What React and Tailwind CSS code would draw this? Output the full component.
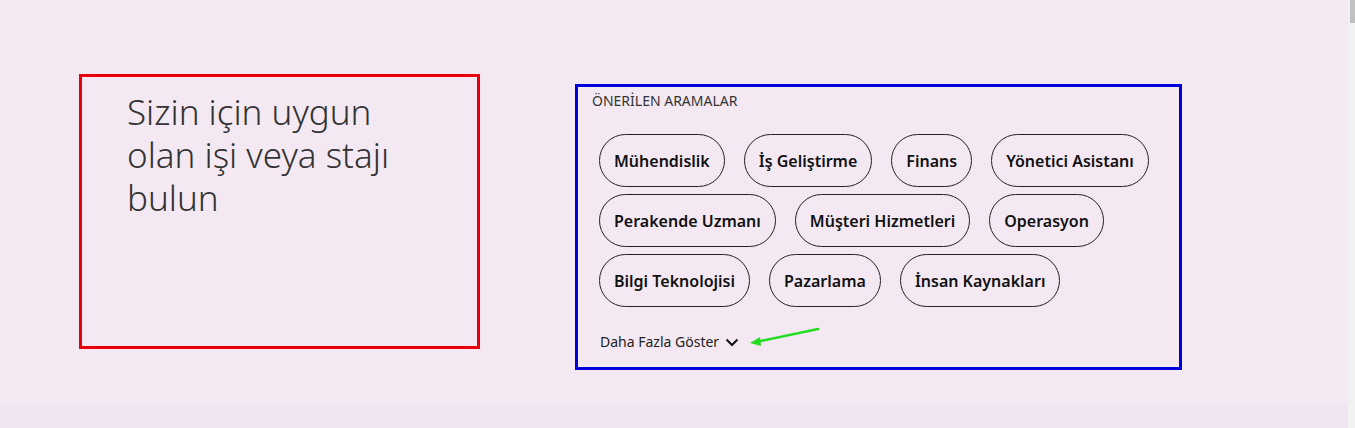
import React from 'react';

const searches = [
  'Mühendislik',
  'İş Geliştirme',
  'Finans',
  'Yönetici Asistanı',
  'Perakende Uzmanı',
  'Müşteri Hizmetleri',
  'Operasyon',
  'Bilgi Teknolojisi',
  'Pazarlama',
  'İnsan Kaynakları',
];

const App = () => {
  return (
    <div className="flex h-[428px] bg-[#f4e9f3] font-['Noto_Sans',sans-serif] text-[#333]">
      <div className="flex-1 flex flex-col">
        <div className="flex items-start h-[405px]">
          {/* Heading block */}
          <div className="ml-[79px] mt-[74px] w-[401px] h-[275px] border-[3px] border-[#e8000b] pl-[45px] pt-[13px]">
            <h1 className="text-[35px] leading-[43px] font-light text-[#333]">
              Sizin için uygun
              <br />
              olan işi veya stajı
              <br />
              bulun
            </h1>
          </div>

          {/* Suggested searches */}
          <div className="relative ml-[95px] mt-[84px] w-[607px] h-[286px] border-[3px] border-[#0000dd] pl-[14px] pt-[4px]">
            <p className="text-[14px] leading-[20px] text-[#333]">ÖNERİLEN ARAMALAR</p>
            <div className="mt-[23px] ml-[7px] w-[575px] flex flex-wrap gap-x-[19px] gap-y-[7px]">
              {searches.map((s) => (
                <button
                  key={s}
                  className="h-[53px] px-[14px] rounded-full border border-[#222] text-[16px] font-semibold text-[#111]"
                >
                  {s}
                </button>
              ))}
            </div>
            <button className="mt-[25px] ml-[8px] flex items-center gap-[6px] text-[14px] leading-[20px] text-[#222]">
              Daha Fazla Göster
              <svg width="14" height="9" viewBox="0 0 14 9" fill="none">
                <path d="M1.5 1.5 L7 7 L12.5 1.5" stroke="#111" strokeWidth="2" />
              </svg>
            </button>

            {/* annotation arrow */}
            <svg className="absolute left-[168px] top-[238px]" width="80" height="24" viewBox="0 0 80 24">
              <path d="M72 4 L10 17" stroke="#22dd22" strokeWidth="2.5" strokeLinecap="round" />
              <path d="M4 18 L14 12 L15 21 Z" fill="#22dd22" />
            </svg>
          </div>
        </div>
        <div className="flex-1 bg-[#f0e4f2]" />
      </div>

      {/* scrollbar */}
      <div className="w-[7px] bg-[#f1f1f1] flex justify-end">
        <div className="w-[5px] h-[23px] bg-[#c1c1c1]" />
      </div>
    </div>
  );
};

export default App;
